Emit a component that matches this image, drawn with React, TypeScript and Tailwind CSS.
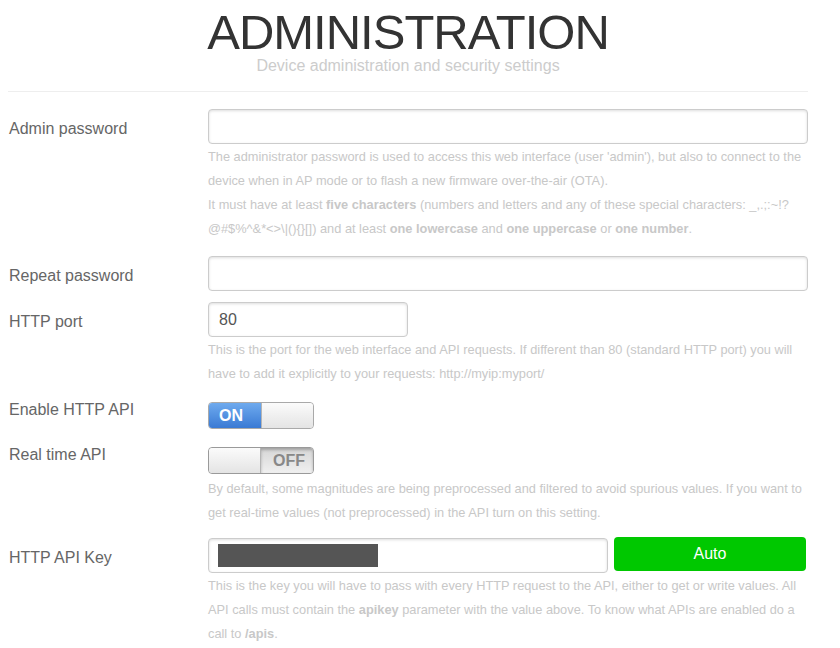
import type { ReactNode } from "react";

const font = "font-['Liberation_Sans',Arial,sans-serif]";

function Hint({ children, className = "" }: { children: ReactNode; className?: string }) {
  return <div className={`text-[12.8px] leading-[24px] text-[#c8c8c8] ${className}`}>{children}</div>;
}

function Label({ children, className = "" }: { children: ReactNode; className?: string }) {
  return (
    <div className={`w-[200px] shrink-0 text-[16px] leading-[20px] text-[#666] ${className}`}>{children}</div>
  );
}

function TextInput({ value = "", type = "text", className = "" }: { value?: string; type?: string; className?: string }) {
  return (
    <input
      type={type}
      readOnly
      value={value}
      className={`block h-[35px] rounded-[4px] border border-[#ccc] bg-white px-[10px] text-[16px] text-[#555] shadow-[inset_0_1px_3px_#ddd] outline-none ${className}`}
    />
  );
}

function Toggle({ on }: { on: boolean }) {
  if (on) {
    return (
      <div className="flex h-[27px] w-[106px] overflow-hidden rounded-[4px] border border-[#a9a9a9]">
        <div className="flex w-[52px] items-center bg-linear-to-b from-[#6eaaee] to-[#3a7ad4] pl-[10px] text-[16px] font-bold text-white">
          ON
        </div>
        <div className="flex-1 rounded-r-[3px] border-l border-[#b5b5b5] bg-linear-to-b from-[#fbfbfb] to-[#e4e4e4]" />
      </div>
    );
  }
  return (
    <div className="flex h-[27px] w-[106px] overflow-hidden rounded-[4px] border border-[#9a9a9a]">
      <div className="w-[52px] rounded-l-[3px] border-r border-[#b5b5b5] bg-linear-to-b from-[#fbfbfb] to-[#e4e4e4]" />
      <div className="flex flex-1 items-center bg-linear-to-b from-[#d6d6d6] to-[#f0f0f0] pl-[12px] text-[16px] font-bold text-[#888] shadow-[inset_0_2px_3px_rgba(0,0,0,0.25)]">
        OFF
      </div>
    </div>
  );
}

export default function App() {
  return (
    <div className={`${font} min-h-[648px] bg-white`}>
      <div className="ml-[8px] w-[800px]">
        <div className="pt-[7px] text-center">
          <h1 className="text-[49px] leading-[50px] tracking-[-1px] text-[#333]">ADMINISTRATION</h1>
          <h2 className="-mt-[1px] text-[16px] leading-[20px] text-[#ccc]">Device administration and security settings</h2>
        </div>
        <hr className="mt-[15px] mb-[17px] border-0 border-t border-[#eee]" />

        <div className="mb-[15px] flex">
          <Label className="pt-[10px] pl-[1px]">Admin password</Label>
          <div className="flex-1">
            <TextInput type="password" className="w-full" />
            <Hint className="mt-[1px]">
              The administrator password is used to access this web interface (user 'admin'), but also to connect to the
              device when in AP mode or to flash a new firmware over-the-air (OTA).
              <br />
              It must have at least <b>five characters</b> (numbers and letters and any of these special characters: _,.;:~!?
              @#$%^&amp;*&lt;&gt;\|(){"{}"}[]) and at least <b>one lowercase</b> and <b>one uppercase</b> or <b>one number</b>.
            </Hint>
          </div>
        </div>

        <div className="mb-[11px] flex">
          <Label className="pt-[10px] pl-[1px]">Repeat password</Label>
          <div className="flex-1">
            <TextInput type="password" className="w-full" />
          </div>
        </div>

        <div className="mb-[13px] flex">
          <Label className="pt-[10px] pl-[1px]">HTTP port</Label>
          <div className="flex-1">
            <TextInput value="80" className="w-[200px]" />
            <Hint className="mt-[1px]">
              This is the port for the web interface and API requests. If different than 80 (standard HTTP port) you will
              have to add it explicitly to your requests: http://myip:myport/
            </Hint>
          </div>
        </div>

        <div className="mb-[15px] flex">
          <Label className="pt-[1px] pl-[1px]">Enable HTTP API</Label>
          <div className="flex-1 pt-[3px]">
            <Toggle on />
          </div>
        </div>

        <div className="mb-[13px] flex">
          <Label className="pt-[1px] pl-[1px]">Real time API</Label>
          <div className="flex-1 pt-[3px]">
            <Toggle on={false} />
            <Hint className="mt-[3px]">
              By default, some magnitudes are being preprocessed and filtered to avoid spurious values. If you want to
              get real-time values (not preprocessed) in the API turn on this setting.
            </Hint>
          </div>
        </div>

        <div className="flex">
          <Label className="pt-[10px] pl-[1px]">HTTP API Key</Label>
          <div className="flex-1">
            <div className="flex items-start gap-[6px]">
              <div className="flex h-[35px] w-[400px] items-center rounded-[4px] border border-[#ccc] bg-white pl-[9px] shadow-[inset_0_1px_3px_#ddd]">
                <div className="h-[23px] w-[160px] bg-[#555]" />
              </div>
              <button className="-mt-[1px] h-[34px] w-[192px] rounded-[4px] bg-[#00c800] text-[16px] text-white">
                Auto
              </button>
            </div>
            <Hint className="mt-[1px]">
              This is the key you will have to pass with every HTTP request to the API, either to get or write values. All
              API calls must contain the <b>apikey</b> parameter with the value above. To know what APIs are enabled do a
              call to <b>/apis</b>.
            </Hint>
          </div>
        </div>
      </div>
    </div>
  );
}
